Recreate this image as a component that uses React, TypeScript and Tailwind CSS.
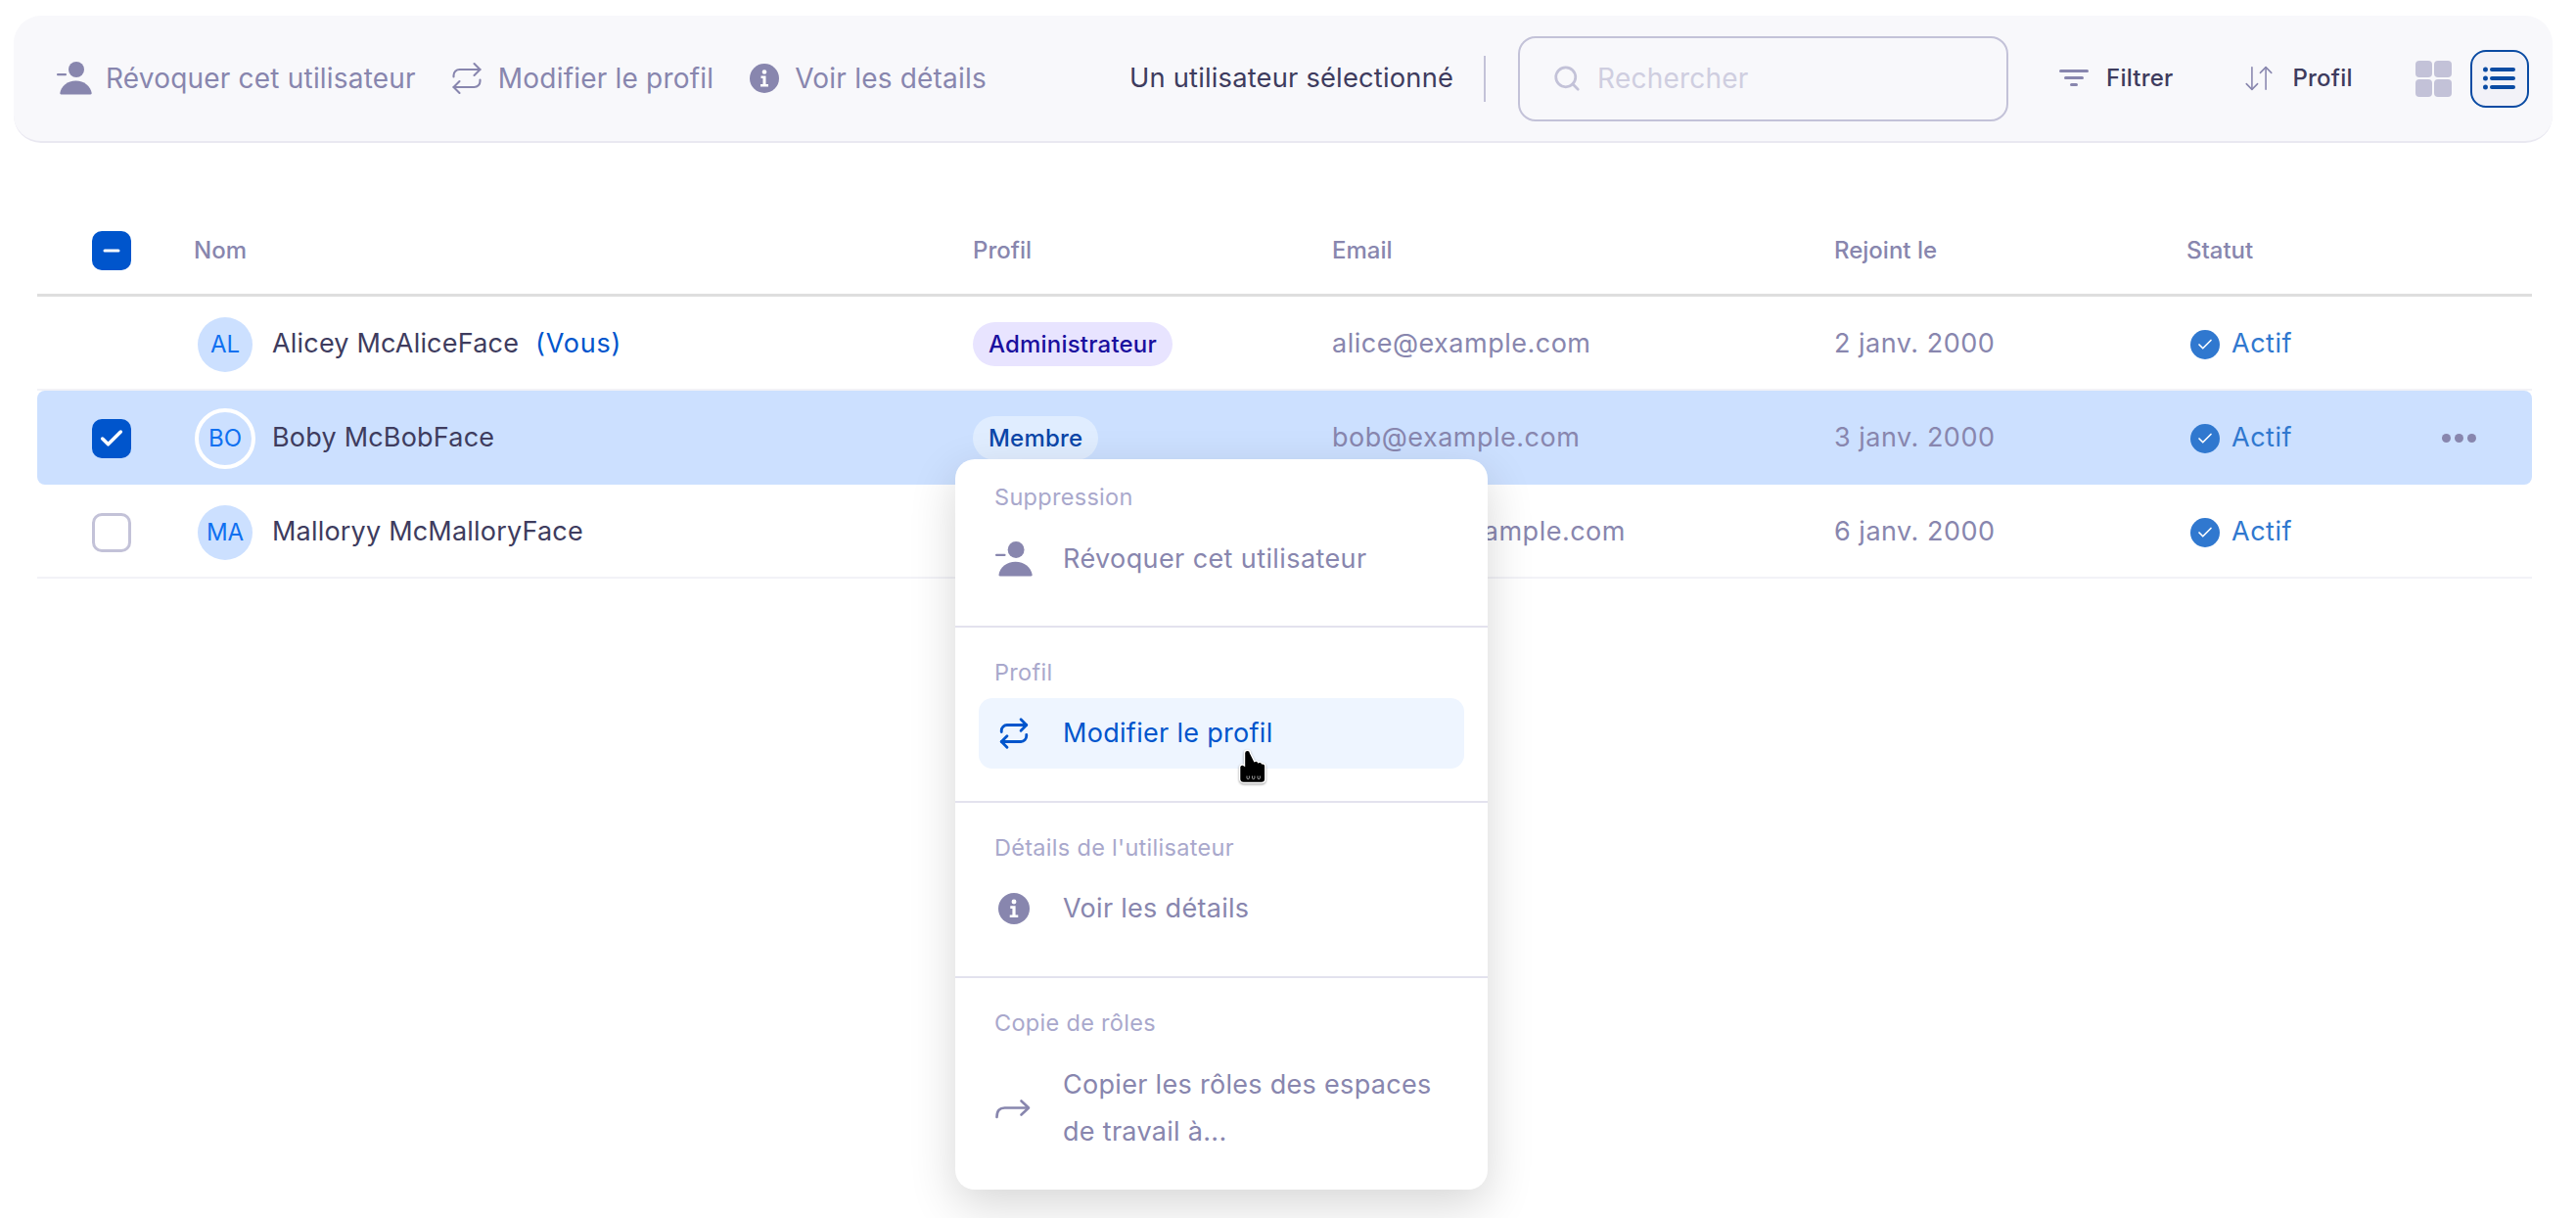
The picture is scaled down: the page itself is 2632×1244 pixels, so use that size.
import React from 'react';
import { Search, Repeat, ArrowDownUp, Check, Minus } from 'lucide-react';

const PersonMinus = ({ className }: { className?: string }) => (
  <svg viewBox="0 0 36 34" className={className} fill="currentColor">
    <circle cx="20" cy="8" r="8" />
    <path d="M4.5 33.5c-.8 0-1.300-.6-1.200-1.400C4.300 25 11 19.500 19.500 19.500s15 5.500 16.200 12.600c.1.800-.4 1.400-1.200 1.400z" />
    <rect x="0" y="12" width="10" height="2.200" rx="1" />
  </svg>
);

const InfoDot = ({ className }: { className?: string }) => (
  <svg viewBox="0 0 30 30" className={className}>
    <circle cx="15" cy="15" r="15" fill="currentColor" />
    <circle cx="15" cy="8.500" r="2.300" fill="white" />
    <path d="M11.500 12.500h5v8.500h2.500v2.500h-8v-2.500h2.500v-6h-2z" fill="white" />
  </svg>
);

const ShareArrow = ({ className }: { className?: string }) => (
  <svg viewBox="0 0 36 24" className={className} fill="none" stroke="currentColor" strokeWidth="2.600" strokeLinecap="round" strokeLinejoin="round">
    <path d="M1.500 21c0-7 3-9.500 8-9.500H33" />
    <path d="M26.500 4.500l7.500 7-7.500 7" />
  </svg>
);

const ActiveBadge = () => (
  <span className="flex h-[30px] w-[30px] items-center justify-center rounded-full bg-[#3078cf] text-white">
    <Check size={18} strokeWidth={2.200} />
  </span>
);

const HandCursor = () => (
  <svg viewBox="0 0 30 36" className="absolute left-[265px] top-[52px] h-[36px] w-[30px] drop-shadow-[0_1px_1px_rgba(0,0,0,0.4)]">
    <path
      d="M9.500 1.200c-1.800 0-3 1.300-3 3V17l-1.500-.8c-1.800-.6-3.600.8-3.400 2.800v11.500c0 2.300 1.800 4 4 4h18.200c2.300 0 4-1.700 4-4V17.500c0-1.700-1.500-3-3.200-2.600-.8-1.500-2.700-2-4-1.200-.8-1.400-2.600-1.800-3.900-1.100L12.500 4.200c0-1.700-1.200-3-3-3z"
      fill="black"
      stroke="white"
      strokeWidth="1.400"
    />
    <g fill="none" stroke="#c4c4c4" strokeWidth="0.800">
      <path d="M9 27.500v2a1 1 0 0 0 2.400 0v-2" />
      <path d="M14.500 27.500v2a1 1 0 0 0 2.400 0v-2" />
      <path d="M20 27.500v2a1 1 0 0 0 2.400 0v-2" />
    </g>
  </svg>
);

const users = [
  { initials: 'AL', name: 'Alicey McAliceFace', you: true, role: 'Administrateur', email: 'alice@example.com', joined: '2 janv. 2000' },
  { initials: 'BO', name: 'Boby McBobFace', selected: true, role: 'Membre', email: 'bob@example.com', joined: '3 janv. 2000' },
  { initials: 'MA', name: 'Malloryy McMalloryFace', unchecked: true, email: 'mallory@example.com', joined: '6 janv. 2000' },
];

const Toolbar = () => (
  <div className="mx-[14px] mt-[16px] flex h-[130px] w-[2594px] items-center rounded-[28px] border-b-2 border-[#e9e8f1] bg-[#f8f8fb] pl-[44px] text-[28px] tracking-[0.2px] text-[#8886ae]">
    <PersonMinus className="h-[34px] w-[36px]" />
    <span className="ml-[14px]">Révoquer cet utilisateur</span>
    <Repeat size={36} strokeWidth={1.400} className="ml-[34px]" />
    <span className="ml-[14px]">Modifier le profil</span>
    <InfoDot className="ml-[37px] h-[30px] w-[30px]" />
    <span className="ml-[16px]">Voir les détails</span>
    <span className="ml-[146px] text-[27.300px] text-[#3e3c5e]">Un utilisateur sélectionné</span>
    <span className="ml-[31px] h-[47px] w-[2px] bg-[#c3c2d8]" />
    <div className="ml-[33px] flex h-[87px] w-[501px] items-center rounded-[18px] border-2 border-[#c3c2d8] pl-[33px] text-[#cfcee0]">
      <Search size={30} strokeWidth={2.200} className="text-[#c3c2d8]" />
      <span className="ml-[16px]">Rechercher</span>
    </div>
    <svg viewBox="0 0 30 18" className="ml-[52px] h-[18px] w-[30px] text-[#8886ae]" fill="currentColor">
      <rect x="0" y="0" width="30" height="3" rx="1.500" />
      <rect x="5" y="7" width="20" height="3" rx="1.500" />
      <rect x="11" y="14" width="8" height="3" rx="1.500" />
    </svg>
    <span className="ml-[18px] text-[24px] font-medium text-[#3e3c5e]">Filtrer</span>
    <ArrowDownUp size={34} strokeWidth={1.100} className="ml-[71px]" />
    <span className="ml-[17px] text-[24px] font-medium text-[#3e3c5e]">Profil</span>
    <div className="ml-[64px] grid h-[37px] w-[37px] grid-cols-2 gap-[2px]">
      <span className="rounded-[4px] bg-[#c3c2d8]" />
      <span className="rounded-[4px] bg-[#c3c2d8]" />
      <span className="rounded-[4px] bg-[#c3c2d8]" />
      <span className="rounded-[4px] bg-[#c3c2d8]" />
    </div>
    <div className="ml-[19px] flex h-[59px] w-[60px] items-center justify-center rounded-[16px] border-2 border-[#0a4ba3] bg-[#f2f2f8]">
      <svg viewBox="0 0 33 24" className="h-[24px] w-[33px]" fill="#0a4ba3">
        <circle cx="2.500" cy="3" r="2.500" />
        <circle cx="2.500" cy="12" r="2.500" />
        <circle cx="2.500" cy="21" r="2.500" />
        <rect x="7" y="1" width="26" height="4" rx="2" />
        <rect x="7" y="10" width="26" height="4" rx="2" />
        <rect x="7" y="19" width="26" height="4" rx="2" />
      </svg>
    </div>
  </div>
);

const Section = ({ label, className, children }: { label: string; className: string; children: React.ReactNode }) => (
  <div className={className}>
    <div className="h-[30px] pl-[40px] text-[23.500px] leading-[30px] tracking-[0.3px] text-[#a9a8cc]">{label}</div>
    {children}
  </div>
);

const RowMenu = () => (
  <div className="absolute left-[976px] top-[469px] w-[544px] rounded-[20px] bg-white text-[27px] tracking-[0.3px] text-[#8886ae] shadow-[0_16px_48px_rgba(0,0,0,0.16)]">
    <Section label="Suppression" className="h-[170px] pt-[24px]">
      <div className="mx-[24px] mt-[12px] flex h-[72px] items-center pl-[17px]">
        <PersonMinus className="h-[36px] w-[38px]" />
        <span className="ml-[31px] tracking-[0.4px]">Révoquer cet utilisateur</span>
      </div>
    </Section>
    <Section label="Profil" className="h-[179px] border-t-2 border-[#e3e2ee] pt-[31px]">
      <div className="relative mx-[24px] mt-[11px] flex h-[72px] items-center rounded-[14px] bg-[#eef5ff] pl-[19px] text-[#0055cc]">
        <Repeat size={34} strokeWidth={2} />
        <span className="ml-[33px]">Modifier le profil</span>
        <HandCursor />
      </div>
    </Section>
    <Section label="Détails de l'utilisateur" className="h-[179px] border-t-2 border-[#e3e2ee] pt-[31px]">
      <div className="mx-[24px] mt-[11px] flex h-[72px] items-center pl-[20px]">
        <InfoDot className="h-[32px] w-[32px]" />
        <span className="ml-[34px]">Voir les détails</span>
      </div>
    </Section>
    <Section label="Copie de rôles" className="h-[218px] border-t-2 border-[#e3e2ee] pt-[31px]">
      <div className="mx-[24px] mt-[24px] flex items-center pl-[17px]">
        <ShareArrow className="h-[24px] w-[36px]" />
        <span className="ml-[33px] leading-[48px]">
          Copier les rôles des espaces
          <br />
          de travail à...
        </span>
      </div>
    </Section>
  </div>
);

export default function App() {
  return (
    <div className="relative h-[1244px] w-[2632px] overflow-hidden bg-white font-[Inter,sans-serif]">
      <Toolbar />

      <div className="mx-[38px] mt-[57px] w-[2549px]">
        <div className="grid h-[100px] grid-cols-[160px_796px_367px_513px_360px_1fr] items-center border-b-[3px] border-[#dedede] pt-[8px] text-[24px] font-medium text-[#8886ae]">
          <span className="ml-[56px] flex h-[40px] w-[40px] items-center justify-center rounded-[10px] bg-[#0055cc] text-white">
            <Minus size={24} strokeWidth={3} />
          </span>
          <span>Nom</span>
          <span>Profil</span>
          <span>Email</span>
          <span>Rejoint le</span>
          <span>Statut</span>
        </div>

        {users.map(u => (
          <div
            key={u.initials}
            className={`grid h-[96px] grid-cols-[160px_796px_367px_513px_360px_1fr] items-center text-[27px] tracking-[0.5px] text-[#8886ae] ${
              u.selected ? 'rounded-[8px] bg-[#cce0ff] pt-[1px]' : 'border-b-2 border-[#f2f2f7] pt-[3px]'
            }`}
          >
            <div>
              {u.selected && (
                <span className="ml-[56px] flex h-[40px] w-[40px] items-center justify-center rounded-[10px] bg-[#0055cc] text-white">
                  <Check size={28} strokeWidth={3} />
                </span>
              )}
              {u.unchecked && <span className="ml-[56px] block h-[40px] w-[40px] rounded-[10px] border-[3px] border-[#c3c2d8] bg-white" />}
            </div>
            <div className="flex items-center">
              <span
                className={`ml-[4px] flex h-[56px] w-[56px] items-center justify-center rounded-full bg-[#cce0ff] text-[24px] tracking-normal text-[#1070f0] ${
                  u.selected ? 'outline-[4px] -outline-offset-1 outline-white' : ''
                }`}
              >
                {u.initials}
              </span>
              <span className="ml-[20px] tracking-[0.2px] text-[#3e3c5e]">{u.name}</span>
              {u.you && <span className="ml-[17px] tracking-[0.8px] text-[#0055cc]">(Vous)</span>}
            </div>
            <div>
              {u.role && (
                <span
                  className={`inline-flex h-[45px] items-center rounded-full px-[16px] text-[24px] tracking-[0.2px] font-medium ${
                    u.selected ? 'bg-[#e0edff] text-[#0a46a8]' : 'bg-[#e8e4ff] text-[#1a0f9e]'
                  }`}
                >
                  {u.role}
                </span>
              )}
            </div>
            <span>{u.email}</span>
            <span>{u.joined}</span>
            <div className="flex items-center pl-[4px] text-[#3078cf]">
              <ActiveBadge />
              <span className="ml-[12px]">Actif</span>
              {u.selected && (
                <span className="ml-[153px] flex gap-[4px]">
                  <i className="h-[9px] w-[9px] rounded-full bg-[#8886ae]" />
                  <i className="h-[9px] w-[9px] rounded-full bg-[#8886ae]" />
                  <i className="h-[9px] w-[9px] rounded-full bg-[#8886ae]" />
                </span>
              )}
            </div>
          </div>
        ))}
      </div>

      <RowMenu />
    </div>
  );
}
